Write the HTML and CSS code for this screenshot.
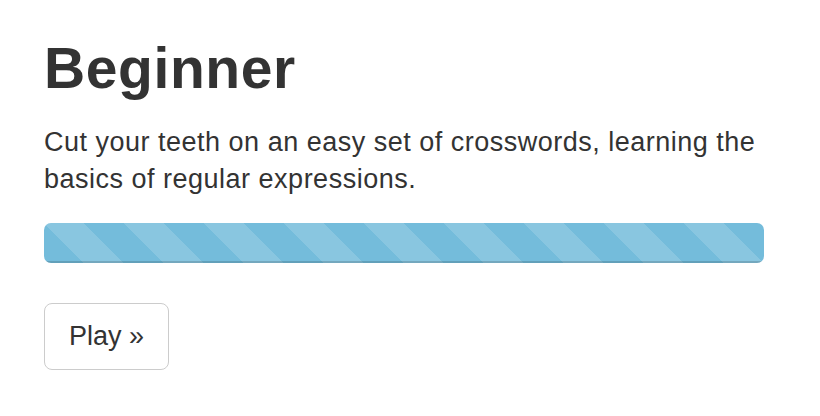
FILE: index.html
```html
<!DOCTYPE html>
<html>
<head>
<meta charset="utf-8">
<link rel="stylesheet" href="styles.css">
</head>
<body>
<div class="level">
  <h1 class="title">Beginner</h1>
  <p class="desc">Cut your teeth on an easy set of crosswords, learning the basics of regular expressions.</p>
  <div class="progress"><div class="bar"></div></div>
  <a class="btn" href="#">Play &raquo;</a>
</div>
</body>
</html>
```
FILE: styles.css
```css
html, body { margin: 0; padding: 0; background: #fff; }
body { font-family: "Liberation Sans", Arial, sans-serif; color: #333; }
.level { padding: 36px 56px 0 44px; display: flex; flex-direction: column; align-items: flex-start; }
.title { margin: 0; font-size: 57px; font-weight: bold; line-height: 64px; letter-spacing: 0.6px; }
.desc { margin: 24px 0 0; font-size: 27px; line-height: 37px; letter-spacing: 0.5px; }
.progress { margin-top: 25px; width: 720px; height: 40px; border-radius: 7px; overflow: hidden; background: #f5f5f5; }
.bar { width: 100%; height: 100%; background-color: #74bcdb;
  background-image: linear-gradient(45deg, rgba(255,255,255,.15) 25%, transparent 25%, transparent 50%, rgba(255,255,255,.15) 50%, rgba(255,255,255,.15) 75%, transparent 75%, transparent);
  background-size: 80px 80px; box-shadow: inset 0 -2px 0 rgba(0,0,0,.15); }
.btn { margin-top: 40px; display: inline-flex; align-items: center; justify-content: center; box-sizing: border-box; width: 125px; height: 67px; border: 1.5px solid #ccc; border-radius: 8px; color: #333; text-decoration: none; font-size: 27px; }
```
